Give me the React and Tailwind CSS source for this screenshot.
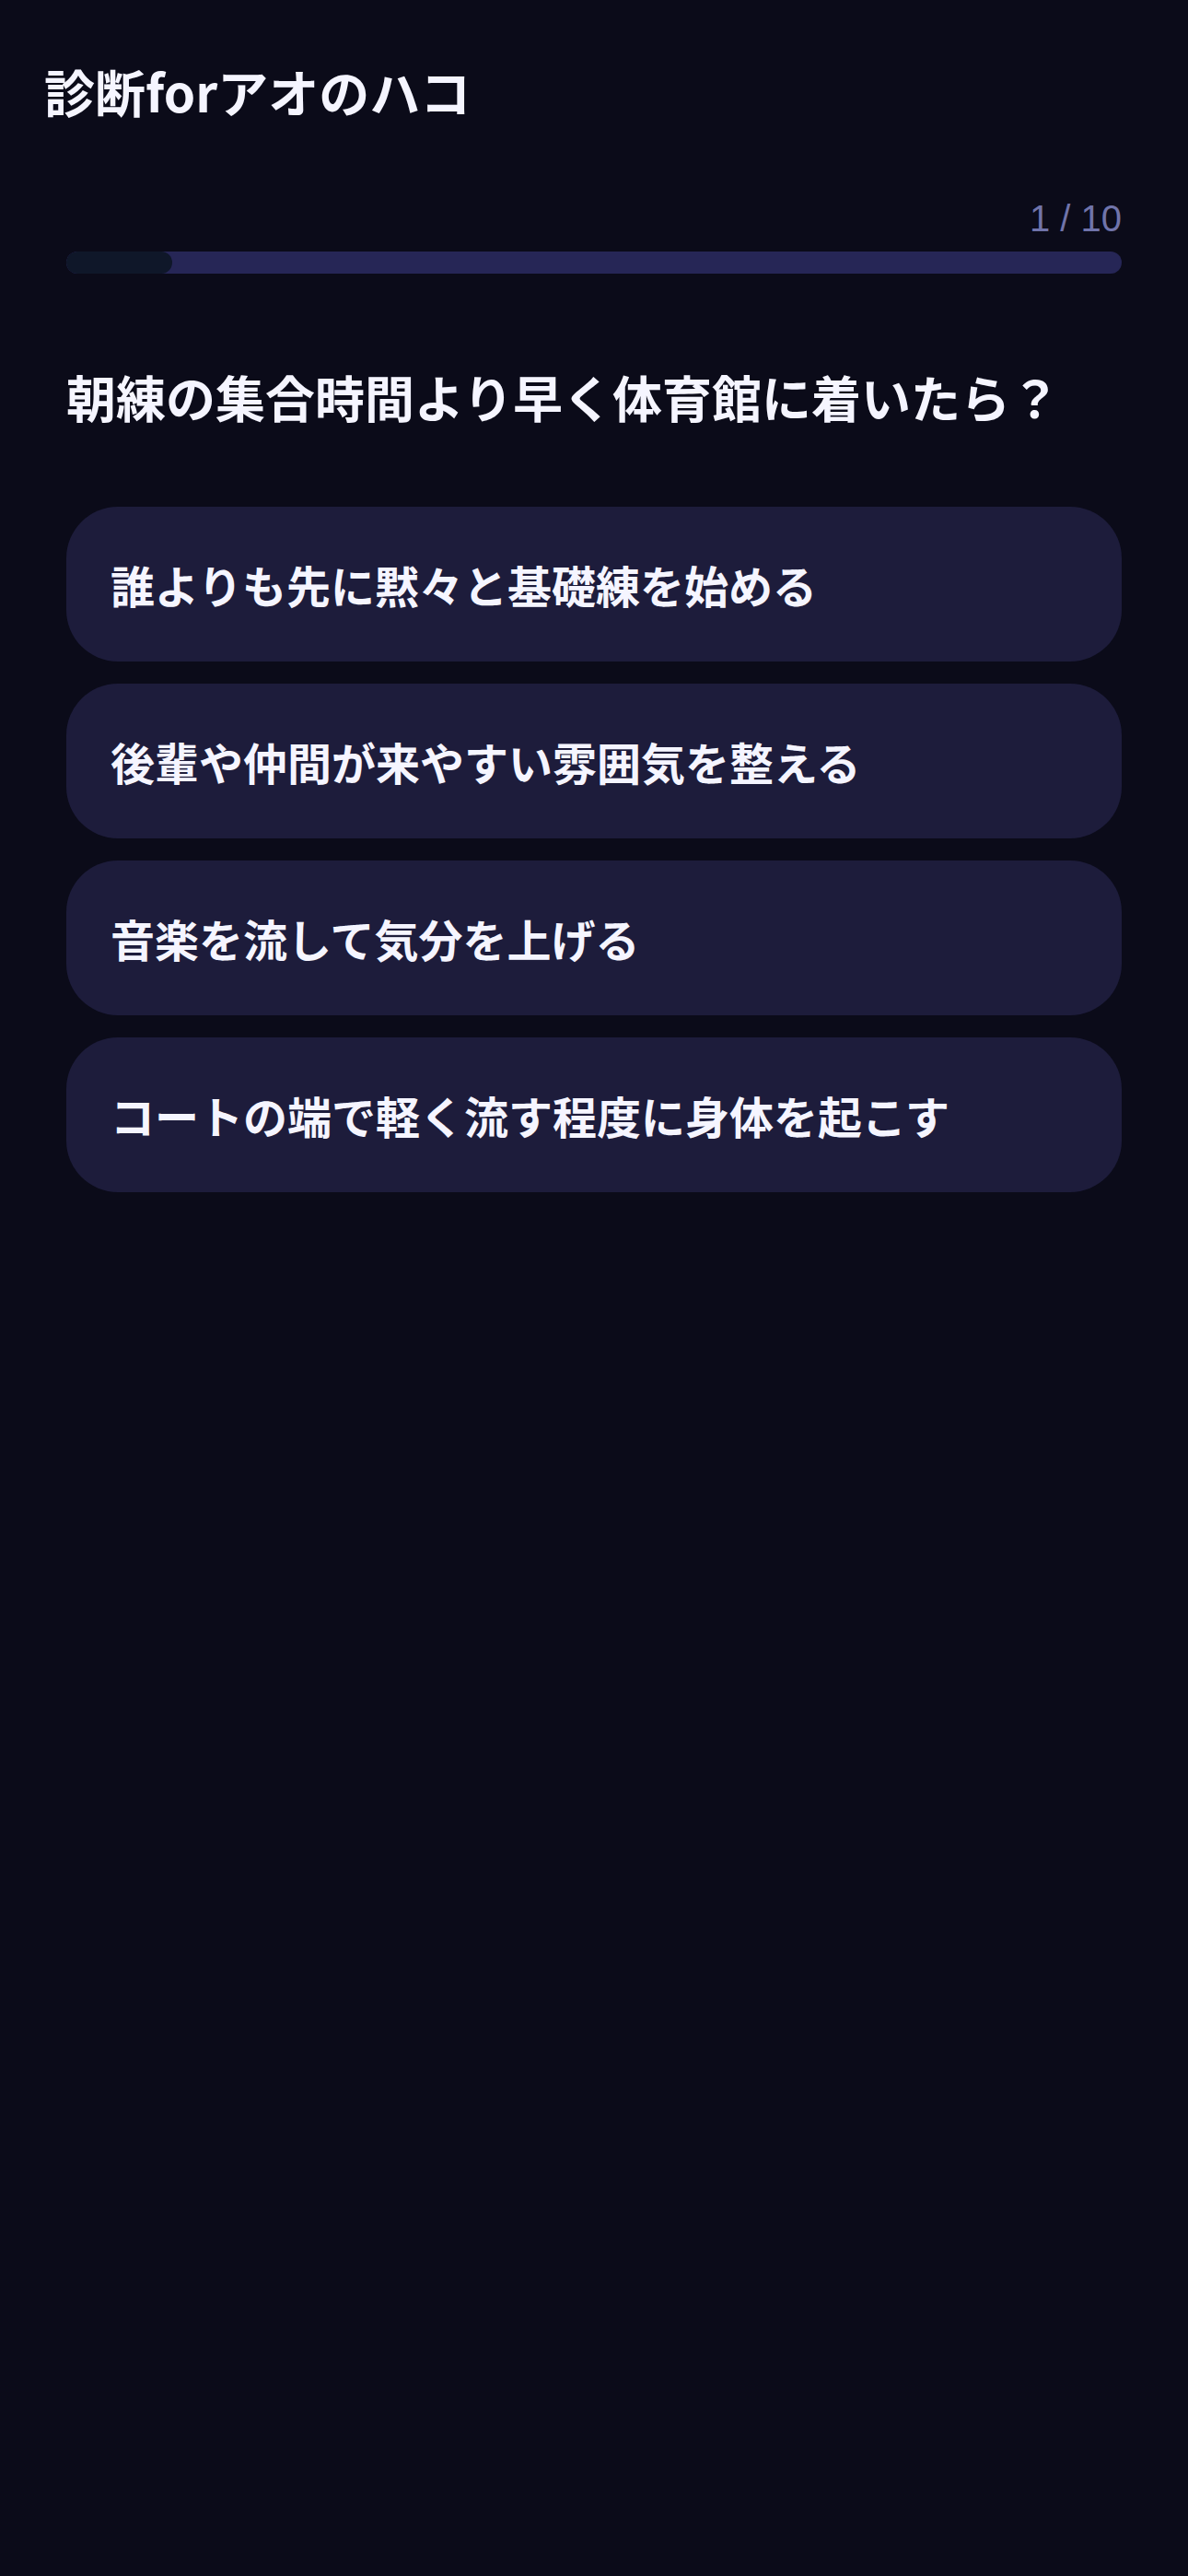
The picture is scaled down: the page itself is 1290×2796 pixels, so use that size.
import React from "react";

const options = [
  "誰よりも先に黙々と基礎練を始める",
  "後輩や仲間が来やすい雰囲気を整える",
  "音楽を流して気分を上げる",
  "コートの端で軽く流す程度に身体を起こす",
];

export default function App() {
  const current = 1;
  const total = 10;

  return (
    <div className="min-h-screen bg-[#0b0b19] text-[#f5f5ff] font-['Noto_Sans_CJK_JP','Noto_Sans',sans-serif]">
      <header className="px-12 pt-[56px]">
        <h1 className="text-[55px] leading-[84px] font-bold">診断forアオのハコ</h1>
      </header>

      <main className="px-[72px]">
        <div className="mt-[74px]">
          <div className="text-right text-[40px] leading-[46px] text-[#7074aa] font-['Liberation_Sans',Arial,sans-serif]">
            {current} / {total}
          </div>
          <div className="mt-[13px] h-6 rounded-full bg-[#262656] overflow-hidden">
            <div className="h-full w-[10%] rounded-full bg-[#0f1729]" />
          </div>
        </div>

        <h2 className="mt-[97px] text-[54px] leading-[74px] font-bold">
          朝練の集合時間より早く体育館に着いたら？
        </h2>

        <div className="mt-[82px] flex flex-col gap-6">
          {options.map((o) => (
            <button
              key={o}
              className="w-full text-left rounded-[56px] bg-[#1d1c3b] px-12 py-12 text-[48px] leading-[72px] font-bold text-[#f5f5ff]"
            >
              {o}
            </button>
          ))}
        </div>
      </main>
    </div>
  );
}
